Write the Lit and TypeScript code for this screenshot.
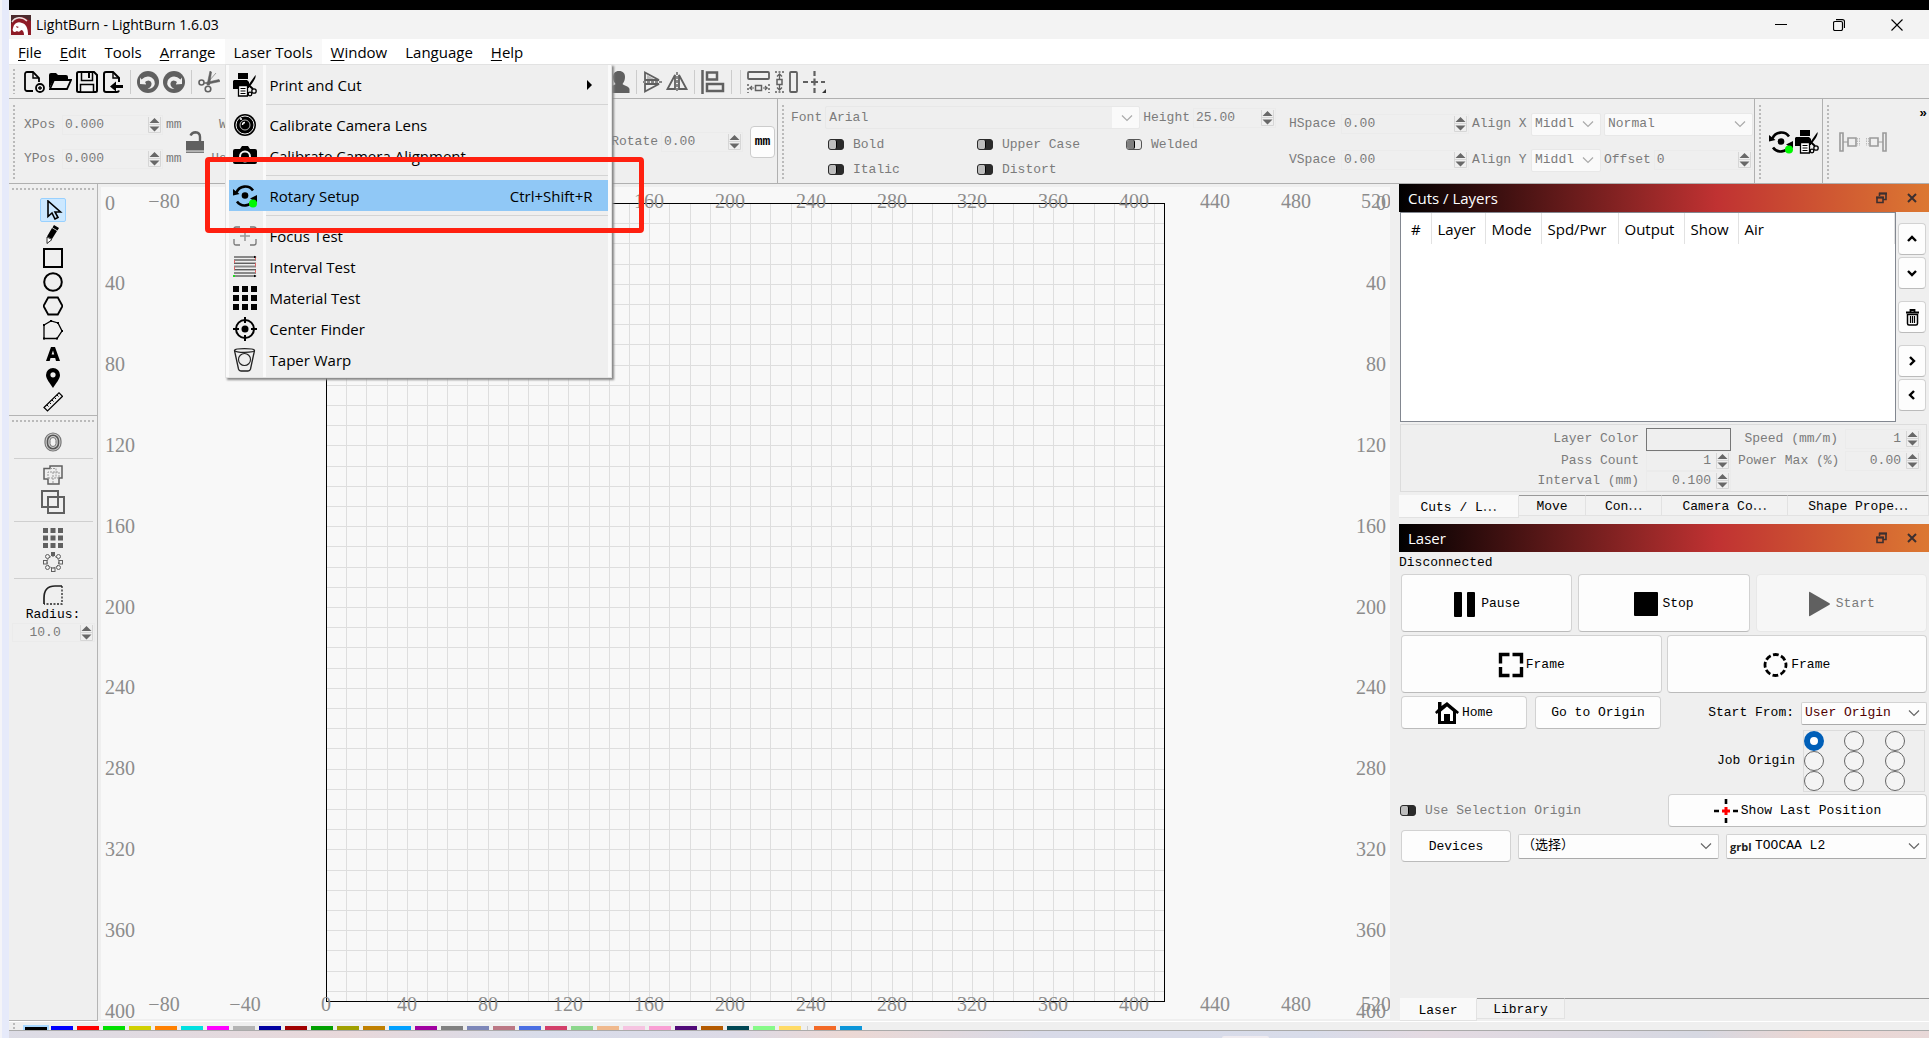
import { LitElement, html, css, svg, nothing } from "lit";
import { customElement } from "lit/decorators.js";
import { classMap } from "lit/directives/class-map.js";
import { styleMap } from "lit/directives/style-map.js";

const SCALE = 2.02;

const icon = (w: number, h: number, box: string, body: unknown) =>
  html`<svg class="ico" width=${w} height=${h} viewBox=${box} aria-hidden="true">${body}</svg>`;

const chevron = (color: string) =>
  icon(12, 8, "0 0 12 8", svg`<path d="M1 1.5 6 6.5 11 1.5" fill="none" stroke=${color} stroke-width="1.2"/>`);

const printCut = svg`
  <path d="M5 0h10v6H5z" fill="#000"/>
  <path d="M1 7h13l2 2v6h-2v-2H5v3H0V8z" fill="#000"/>
  <path d="M5.500 12.500h9V23h-9z" fill="#fff" stroke="#000" stroke-width="1.300"/>
  <path d="M7.500 15.500h5M7.500 18h5M7.500 20.500h5" stroke="#000" stroke-width="1"/>
  <path d="M22.500 2c1 3-3 8-6 12l-1.500-1.500z" fill="#000"/>
  <path d="M15 11.500 20 16" stroke="#000" stroke-width="2"/>
  <circle cx="21" cy="18" r="2.200" fill="none" stroke="#000" stroke-width="1.300"/>
  <circle cx="17" cy="21" r="1.800" fill="none" stroke="#000" stroke-width="1.300"/>`;

const rotary = svg`
  <path d="M3.500 8.500A9.500 9.500 0 0 1 20 6.500M20.500 15.500A9.500 9.500 0 0 1 4 17.500" fill="none" stroke="#000" stroke-width="2.600"/>
  <path d="M0 5v6.500l6.500-1.500zM24 18.500V11l-7 3.500z" fill="#000"/>
  <circle cx="12" cy="11.500" r="3.300" fill="#000"/>
  <circle cx="20" cy="19.500" r="4" fill="#00f800"/>`;

const dots = (size: number, gap: number, color: string) =>
  [0, 1, 2].flatMap((r) =>
    [0, 1, 2].map(
      (c) => svg`<rect x=${c * (size + gap)} y=${r * (size + gap)} width=${size} height=${size} fill=${color}/>`
    )
  );

const swirl = svg`
  <circle cx="11" cy="11" r="11" fill="#606060"/>
  <path d="M3 6.500l1.500 2Q9.500 4 14.500 6.500q5 3.500 2.500 8.500-2 3-6.500 3 4-2 4-5 0-3-3-3.500-2 0-3.500 1.500l1.500 2.500-6.500-.5z" fill="#efefef"/>
  <circle cx="11.500" cy="12.500" r="2.600" fill="#606060"/>`;

const I = {
  logo: icon(20, 20, "0 0 20 20", svg`
    <rect width="20" height="20" fill="#8e1b26"/>
    <path d="M0 0h20v6L12 2 3 5 0 9z" fill="#4b2a2c"/>
    <path d="M1 7C4 2 11 1 16 6" fill="none" stroke="#e9dedd" stroke-width="1.500"/>
    <path d="M2 13c1-5 5-7 9-5 4 1 6 5 6 12h-4c0-3-1-5-3-5-1 2-3 2-4 1l-2 1c-2 0-3-2-2-4z" fill="#fff"/>
    <path d="M5 11l3 1-2 1z" fill="#8e1b26"/>`),
  newFile: icon(22, 24, "0 0 22 24", svg`
    <path d="M10 21H4a2 2 0 0 1-2-2V4a2 2 0 0 1 2-2h6l6 6v4" fill="none" stroke="#000" stroke-width="1.800"/>
    <path d="M10 2v6h6" fill="none" stroke="#000" stroke-width="1.400"/>
    <circle cx="17" cy="18" r="4" fill="#efefef" stroke="#000" stroke-width="1.800"/>
    <path d="M17 16v4M15 18h4" stroke="#000" stroke-width="1.300"/>`),
  open: icon(23, 20, "0 0 23 20", svg`
    <path d="M0 16V3q0-2 2-2h5l2 2h8q2 0 2 2v2H5z" fill="#000"/>
    <path d="M5 8h17l-4 9H1z" fill="#efefef" stroke="#000" stroke-width="1.800"/>
    <path d="M0 16V3l5 4z" fill="#000"/>`),
  save: icon(22, 22, "0 0 22 22", svg`
    <path d="M1 2.500Q1 1 2.500 1H18l3 3v15.500q0 1.500-1.500 1.500h-17Q1 21 1 19.500z" fill="none" stroke="#000" stroke-width="2"/>
    <path d="M5.500 1v8.500h11V1" fill="none" stroke="#000" stroke-width="1.500"/><path d="M13 2v5" stroke="#000" stroke-width="2"/>
    <path d="M4.500 13.500h13V21h-13z" fill="#f4f4f4" stroke="#000" stroke-width="1.500"/>`),
  importFile: icon(22, 24, "0 0 22 24", svg`
    <path d="M17 20.500q-.5 1.500-2 1.500H4a2 2 0 0 1-2-2V4a2 2 0 0 1 2-2h7l6 6v4" fill="none" stroke="#000" stroke-width="2"/>
    <path d="M11 2v6h6" fill="none" stroke="#000" stroke-width="1.400"/>
    <path d="M8 16.500 14 11.500v3.500h7v3h-7v3.500z" fill="#000"/>`),
  undo: icon(22, 22, "0 0 22 22", swirl),
  redo: icon(22, 22, "0 0 22 22", svg`<g transform="matrix(-1 0 0 1 22 0)">${swirl}</g>`),
  cut: icon(22, 22, "0 0 22 22", svg`
    <path d="M6 12 21 8.500l1 2L10 13zM9 14 12 0l1.500 1-2 13zM11 10 18 2" fill="#606060" stroke="#606060" stroke-width=".6"/>
    <circle cx="3.500" cy="11.500" r="2.500" fill="none" stroke="#606060" stroke-width="1.600"/>
    <circle cx="10" cy="18" r="2.800" fill="none" stroke="#606060" stroke-width="1.600"/>`),
  person: icon(22, 22, "0 0 22 22", svg`
    <path d="M11 0c4 0 6 2.500 6 6 0 3-1 5-2.500 7 1 1.500 6.500 2 7 5v4H.5v-4c.5-3 6-3.500 7-5C6 11 5 9 5 6c0-3.500 2-6 6-6z" fill="#606060"/>`),
  flipV: icon(19, 22, "0 0 19 22", svg`
    <path d="M2 1.500 16 9H2zM2 20.500 16 13H2z" fill="none" stroke="#606060" stroke-width="1.800"/>
    <path d="M4 4v4h7z" fill="#bbb"/><path d="M0 11h19" stroke="#888" stroke-width="2" stroke-dasharray="3 1"/>`),
  flipH: icon(22, 19, "0 0 22 19", svg`
    <path d="M1.500 17 9 3v14zM20.500 17 13 3v14z" fill="none" stroke="#606060" stroke-width="1.800"/>
    <path d="M11 0v19" stroke="#888" stroke-width="2" stroke-dasharray="3 1"/>`),
  align: icon(24, 24, "0 0 24 24", svg`
    <path d="M1.500 0v24" stroke="#606060" stroke-width="2.500"/>
    <path d="M6 2.500h10v7H6zM6 14h16v7H6z" fill="none" stroke="#606060" stroke-width="2.500"/>`),
  distH: icon(24, 22, "0 0 24 22", svg`
    <rect x="1" y="1" width="21" height="7" rx="1" fill="none" stroke="#606060" stroke-width="1.800"/>
    <path d="M1 13v9M22 13v9" stroke="#606060" stroke-width="1.500" stroke-dasharray="2 2"/>
    <rect x="8.500" y="14.500" width="6" height="5" fill="none" stroke="#606060" stroke-width="1.500"/>
    <path d="M2 17h5M16 17h5M5 15l-2 2 2 2M18 15l2 2-2 2" fill="none" stroke="#606060" stroke-width="1.200"/>`),
  distV: icon(24, 22, "0 0 24 22", svg`
    <path d="M0 1h9M0 21h9" stroke="#606060" stroke-width="1.500" stroke-dasharray="2 1.500"/>
    <rect x="2" y="8.500" width="5" height="5" fill="none" stroke="#606060" stroke-width="1.500"/>
    <path d="M4.500 3v5M4.500 14v5M2 5.500l2.500-2.500L7 5.500M2 16.500 4.500 19 7 16.500" fill="none" stroke="#606060" stroke-width="1.300"/>
    <rect x="15" y="1" width="7" height="20" rx="1" fill="none" stroke="#606060" stroke-width="1.800"/>`),
  crossMove: icon(24, 22, "0 0 24 22", svg`
    <path d="M0 11h5M8 11h7M18 11h4M11.500 0v5M11.500 7.500v7M11.500 17v5" stroke="#606060" stroke-width="2.200"/>
    <path d="M23 18v4h-4z" fill="#333"/>`),
  lock: icon(18, 22, "0 0 18 22", svg`
    <path d="M4.500 4.500Q6 1.200 9.500 1.200q4.500.3 4.500 4.800v5" fill="none" stroke="#606060" stroke-width="2.400"/>
    <rect x="0" y="10" width="18" height="9.500" fill="#606060"/><path d="M0 21.200h18" stroke="#606060" stroke-width="1.200"/>`),
  rotary22: icon(24, 24, "0 0 24 24", rotary),
  printCut22: icon(24, 24, "0 0 24 24", printCut),
  dockL: icon(22, 20, "0 0 22 20", svg`
    <path d="M1 1h3v18H1zM9 6h8v8H9z" fill="none" stroke="#9a9a9a" stroke-width="1.600"/>
    <path d="M4 10h5" stroke="#9a9a9a"/><path d="M18.500 6v8M20.500 6v8" stroke="#bbb" stroke-dasharray="1.500 1"/>`),
  dockR: icon(22, 20, "0 0 22 20", svg`
    <path d="M18 1h3v18h-3zM5 6h8v8H5z" fill="none" stroke="#9a9a9a" stroke-width="1.600"/>
    <path d="M13 10h5" stroke="#9a9a9a"/><path d="M3.500 6v8M1.500 6v8" stroke="#bbb" stroke-dasharray="1.500 1"/>`),
  min: icon(12, 12, "0 0 12 12", svg`<path d="M0 5.500h12" stroke="#000"/>`),
  restore: icon(12, 12, "0 0 12 12", svg`
    <rect x=".5" y="2.500" width="9" height="9" rx="1.500" fill="none" stroke="#000" stroke-width="1.200"/>
    <path d="M3 .6h6.500q2 0 2 2V9" fill="none" stroke="#000" stroke-width="1.200"/>`),
  close: icon(12, 12, "0 0 12 12", svg`<path d="M.5.5l11 11M11.500.5l-11 11" stroke="#000" stroke-width="1.100"/>`),
  float: icon(11, 12, "0 0 11 12", svg`
    <path d="M3.500 4V1.500h6.500v6H7.500M1 5.500h6v5H1z" fill="none" stroke="#3c2f2f" stroke-width="1.600"/>
    <path d="M3 1.500h8M0 5.500h8" stroke="#3c2f2f" stroke-width="2"/>`),
  closeBold: icon(10, 10, "0 0 10 10", svg`<path d="M1 1l8 8M9 1 1 9" stroke="#3c2f2f" stroke-width="2"/>`),
};

const TOOLS = [
  ["Select", svg`<path d="M5 1v15.500l4-3.500 3 6 3-1.500-3-5.500h5.500z" fill="none" stroke="#000" stroke-width="1.600"/>`],
  ["Draw lines", svg`<path d="M11 1l5 3-1.500 2.500-5-3zM9 4l5 3-5 8-5-2.500z" fill="#000"/><path d="M4 13l5 2.500L4 19.500z" fill="#fff" stroke="#000" stroke-width=".8"/>`],
  ["Rectangle", svg`<rect x="1" y="1" width="18" height="18" fill="none" stroke="#000" stroke-width="2"/>`],
  ["Ellipse", svg`<circle cx="10" cy="10" r="8.800" fill="none" stroke="#000" stroke-width="2"/>`],
  ["Polygon", svg`<path d="M5.200 1.500h9.600L19.500 10l-4.700 8.500H5.200L.5 10z" fill="none" stroke="#000" stroke-width="1.800"/>`],
  ["Edit nodes", svg`<path d="M1 5 8 1l7 2 4 8-5 7.500H1z" fill="none" stroke="#000" stroke-width="1.300"/><path d="M0 4h2v2H0zM7 0h2v2H7zM14 2h2v2h-2zM18 10h2v2h-2zM13 17.500h2v2h-2zM0 17.500h2v2H0z" fill="#000"/>`],
  ["Text", svg`<path d="M3 17 8 3h4l5 14h-4l-.8-3H7.500l-.8 3zM8.600 10.500h2.600L10 6.500z" fill="#000" fill-rule="evenodd"/>`],
  ["Position laser", svg`<path d="M10 0a7 7 0 0 1 7 7c0 4-4 8-7 13C7 15 3 11 3 7a7 7 0 0 1 7-7z" fill="#000"/><circle cx="10" cy="6.800" r="2.600" fill="#efefef"/>`],
  ["Measure", svg`<path d="M1 15.500 16 .8l3.500 3.500L4.500 19z" fill="none" stroke="#000" stroke-width="1.200"/><path d="M4 13l1.500 1.500M6.500 10.500 8 12M9 8l1.500 1.500M11.500 5.500 13 7M14 3l1.500 1.500" stroke="#000"/>`],
] as const;

const G = "#606060";
const MOD_TOOLS = {
  offset: icon(18, 20, "0 0 18 20", svg`
    <rect x="1" y="1" width="16" height="18" rx="8" fill="#d0d0d0" stroke="#777" stroke-width="1.200"/>
    <rect x="3.500" y="3.200" width="11" height="13.600" rx="5.500" fill="none" stroke="#555" stroke-width="1.600"/>
    <rect x="6" y="5.500" width="6" height="9" rx="3" fill="#f4f4f4" stroke="#777"/>`),
  weld: icon(20, 20, "0 0 20 20", svg`
    <path d="M1 3.500h6V1h12v12h-3v6H5v-5H1z" fill="none" stroke=${G} stroke-width="1.500"/>
    <path d="M7 3.500h6V13M5 14V7h11v6H5M10 7v12" fill="none" stroke="#999" stroke-width="1" stroke-dasharray="2 1"/>`),
  union: icon(24, 24, "0 0 24 24", svg`
    <path d="M1 1h16v16H1zM7 7h16v16H7z" fill="none" stroke=${G} stroke-width="2"/>`),
  grid: icon(20, 20, "0 0 20 20", dots(5, 2.5, G)),
  radial: icon(20, 20, "0 0 20 20", svg`
    <rect x="8" y="0" width="4" height="4" fill=${G}/>
    <g fill="none" stroke=${G} stroke-width="1">
      <rect x="8.500" y="16" width="3.500" height="3.500"/><rect x=".5" y="8.500" width="3.500" height="3.500"/><rect x="16" y="8.500" width="3.500" height="3.500"/>
      <circle cx="4.500" cy="4.500" r="2"/><circle cx="15.500" cy="4.500" r="2"/><circle cx="4.500" cy="15.500" r="2"/><circle cx="15.500" cy="15.500" r="2"/>
      <circle cx="10" cy="10" r="5.800" stroke-dasharray="2 1.200"/></g>`),
  radius: icon(20, 20, "0 0 20 20", svg`
    <path d="M1 19V13Q1 1 12 1h7" fill="none" stroke="#222" stroke-width="1.700"/>
    <path d="M19 1v18H1" fill="none" stroke="#222" stroke-width="1.300" stroke-dasharray="2 1.500"/>`),
};

interface MenuEntry { label: string; art: unknown; keys?: string; sub?: boolean; active?: boolean; }

const MENU: (MenuEntry | null)[] = [
  { label: "Print and Cut", sub: true, art: printCut },
  null,
  { label: "Calibrate Camera Lens", art: svg`
    <circle cx="12" cy="12" r="11" fill="#000"/><circle cx="12" cy="12" r="9" fill="none" stroke="#eee" stroke-width="1"/>
    <circle cx="12" cy="12" r="5" fill="none" stroke="#ccc" stroke-width=".9"/>
    <path d="M9.500 12a2.500 2.500 0 0 1 2.500-2.500" fill="none" stroke="#fff" stroke-width="1.300"/>
    <circle cx="8" cy="6" r="1.100" fill="#fff"/>` },
  { label: "Calibrate Camera Alignment", art: svg`
    <path d="M2 5h5l2-3h6l2 3h5q2 0 2 2v11q0 2-2 2H2q-2 0-2-2V7q0-2 2-2z" fill="#000"/>
    <circle cx="12" cy="12.500" r="5" fill="none" stroke="#f0f0f0" stroke-width="2"/>` },
  null,
  { label: "Rotary Setup", keys: "Ctrl+Shift+R", active: true, art: rotary },
  null,
  { label: "Focus Test", art: svg`
    <path d="M1 9V5q0-2 2-2h4M17 3h4q2 0 2 2v4M23 15v4q0 2-2 2h-4M7 21H3q-2 0-2-2v-4" fill="none" stroke="#777" stroke-width="1.300"/>
    <path d="M12 7v10M7 12h10" stroke="#999" stroke-width="1.600"/>` },
  { label: "Interval Test", art: svg`
    <path d="M1 2h22M1 5h22M1 8.200h22M1 14.800h22M1 18h22M1 21h22" stroke="#222" stroke-width="1"/>
    <path d="M1 11.500h22" stroke="#888" stroke-width="2"/>
    <path d="M22.500 2v3M1.500 5v3M22.500 8v3.500M1.500 11.500V15M22.500 15v3" stroke="#d66" stroke-width="1"/>
    <path d="M0 20h2v2H0z" fill="#2d2"/><path d="M21 .8 23.500 2 21 3.200zM21 19.800l2.500 1.200-2.500 1.200z" fill="#000"/>` },
  { label: "Material Test", art: dots(6, 3, "#000") },
  { label: "Center Finder", art: svg`
    <circle cx="12" cy="12" r="9" fill="none" stroke="#000" stroke-width="2"/><circle cx="12" cy="12" r="3.500" fill="#000"/>
    <path d="M12 0v6M12 18v6M0 12h6M18 12h6" stroke="#000" stroke-width="2"/>` },
  { label: "Taper Warp", art: svg`
    <path d="M1.500 2.500 5.500 21q.5 2 2.500 2h7q2 0 2.500-2l4-18.500" fill="none" stroke="#222" stroke-width="1.300"/>
    <ellipse cx="11.500" cy="2.500" rx="10" ry="1.800" fill="none" stroke="#222" stroke-width="1.300"/>
    <circle cx="11.500" cy="11.500" r="6" fill="none" stroke="#222" stroke-width="1.100"/>` },
];

const PALETTE = ["#000000", "#0000ff", "#ff0000", "#00e000", "#d0d000", "#ff8000", "#00e0e0", "#ff00ff", "#b4b4b4",
  "#0000a0", "#a00000", "#00a000", "#a0a000", "#c08000", "#00a0ff", "#a000a0", "#808080", "#7d87b9", "#bb7784",
  "#4a6fe3", "#d33f6a", "#8cd78c", "#f0b98d", "#f6c4e1", "#fa9ed4", "#500a78", "#b45a00", "#004754", "#86fa88", "#ffdb66"];
const TOOL_LAYERS = ["#f36926", "#0c96d9"];

const shared = css`
  * { box-sizing: border-box; }
  svg { display: block; flex: none; }
  button, input, select { font: inherit; color: inherit; margin: 0; }
  button { padding: 0; border: 0; background: none; display: flex; align-items: center; justify-content: center; }
  .mono { font-family: "Liberation Mono", "Noto Sans CJK SC", monospace; font-size: 13px; line-height: 16px; }
  .dim { color: #7b7b7b; }
  .spin { display: flex; align-items: center; height: 20px; border: 1px solid #ebebeb; min-width: 0; }
  .spin input { flex: 1; width: 100%; min-width: 0; border: 0; padding: 0 2px; background: none; outline: 0; }
  .spin .ico { margin-right: 1px; }
  .right input { text-align: right; padding-right: 5px; }
  .combo { display: grid; align-items: center; height: 23px; min-width: 0; }
  .combo select { grid-area: 1 / 1; appearance: none; width: 100%; height: 100%; border: 1px solid #e8e8e8; border-radius: 2px;
    background: #fafafa; padding: 0 18px 0 3px; opacity: 1; outline: 0; }
  .combo .ico { grid-area: 1 / 1; justify-self: end; margin-right: 7px; pointer-events: none; }
  .check { display: flex; align-items: center; gap: 9px; }
  .check input { appearance: none; width: 16px; height: 11px; background: #2b2b2b; border: 1px solid #2b2b2b; border-radius: 3px; display: flex; flex: none; }
  .check input::before { content: ""; width: 7px; height: 9px; background: #bdbdbd; border-right: 1px solid #000; border-radius: 2px; }
  .check input:checked { background: #e6e6e6; border-color: #555; }
  .check input:checked::before { background: #808080; }
`;

const arrows = icon(13, 16, "0 0 13 16", svg`
  <path d="M.5 0v15.500h12V0M0 7.500h13" fill="none" stroke="#d6d6d6"/>
  <path d="M1.500 6 6.500 1l5 5zM1.500 9.500l5 5 5-5z" fill="#686868"/>`);

const spin = (name: string, value: string, cls = "") => html`
  <span class="spin ${cls}"><input type="text" aria-label=${name} .value=${value} />${arrows}</span>`;

const combo = (name: string, value: string, cls = "", color = "#aaa") => html`
  <span class="combo ${cls}"><select aria-label=${name}><option>${value}</option></select>${chevron(color)}</span>`;

const check = (label: string, on = false) => html`
  <label class="check"><input type="checkbox" .checked=${on} disabled />${label}</label>`;

@customElement("work-canvas")
export class WorkCanvas extends LitElement {
  static styles = css`
    :host { display: flex; flex: 1; min-width: 0; background: #f8f8f8; }
    .plot { flex: 1; min-width: 0; overflow: hidden; }
    .num { font-family: "Liberation Serif", serif; font-size: 20px; fill: #8c8c8c; }
    .thin { stroke: #dedede; shape-rendering: crispEdges; }
    .area { fill: none; stroke: #000; shape-rendering: crispEdges; }
    .overflow { overflow: visible; }
  `;
  render() {
    const ox = 225, oy = 16;
    const w = Math.round(415 * SCALE), h = Math.round(395 * SCALE);
    const xs = Array.from({ length: 16 }, (_, i) => i * 40 - 80);
    const ys = Array.from({ length: 11 }, (_, i) => i * 40);
    const txt = (v: number) => (v < 0 ? `−${-v}` : `${v}`);
    const top = xs.map((v) => svg`<text class="num" text-anchor="middle" x=${Math.round(ox + v * SCALE)} y="0">${txt(v)}</text>`);
    const side = (anchor: string) =>
      ys.map((v) => svg`<text class="num" text-anchor=${anchor} x="0" y=${Math.floor(23 + v * SCALE)}>${v}</text>`);
    return html`<svg class="plot" role="img" aria-label="Work area">
      ${Array.from({ length: 41 }, (_, i) => {
        const x = Math.round(ox + (i + 1) * 10 * SCALE) + 0.5;
        return svg`<line class="thin" x1=${x} x2=${x} y1=${oy} y2=${oy + h}/>`;
      })}
      ${Array.from({ length: 39 }, (_, i) => {
        const y = Math.round(oy + (i + 1) * 10 * SCALE) + 0.5;
        return svg`<line class="thin" y1=${y} y2=${y} x1=${ox} x2=${ox + w}/>`;
      })}
      <rect class="area" x=${ox + 0.5} y=${oy + 0.5} width=${w} height=${h}/>
      <svg class="overflow" y="21">${top}</svg>
      <svg class="overflow" y="824">${top}</svg>
      <svg class="overflow" x="4">${side("start")}</svg>
      <svg class="overflow" x="100%"><g transform="translate(-4 0)">${side("end")}</g></svg>
    </svg>`;
  }
}

@customElement("dock-panels")
export class DockPanels extends LitElement {
  static styles = [shared, css`
    :host { display: flex; flex-direction: column; width: 530px; flex: none; }
    .title { height: 28px; display: flex; align-items: center; padding: 0 12px 0 9px; color: #fff; font-size: 15px;
      background: linear-gradient(90deg, #000 0%, #c03232 60%, #dc7832 100%); }
    .title h2 { font: inherit; margin: 0; flex: 1; }
    .title .pair { display: flex; gap: 20px; }
    .cuts { display: flex; gap: 2px; padding: 0 3px 0 1px; }
    .list { flex: 1; height: 210px; border: 1px solid #828790; background: #fff; }
    table { border-collapse: collapse; width: 100%; font-size: 15px; table-layout: fixed; }
    th { height: 31px; font-weight: 400; text-align: left; padding: 0 0 0 6px; border-right: 1px solid #e2e2e2; white-space: nowrap; }
    th:first-child { padding-left: 10px; }
    .c0 { width: 30px; } .c1, .c5 { width: 54px; } .c2 { width: 56px; } .c3 { width: 77px; } .c4 { width: 66px; }
    .moves { display: flex; flex-direction: column; gap: 2px; padding-top: 11px; width: 28px; }
    .push { background: #fdfdfd; border: 1px solid #d2d2d2; border-bottom-color: #bbb; border-radius: 4px; white-space: nowrap; }
    .moves .push { height: 32px; width: 28px; }
    .moves .apart { margin-top: 10px; }
    .params { margin: 2px 2px 0 1px; border: 1px solid #dcdcdc; height: 68px; padding: 2px 5px; display: grid; justify-content: end;
      grid-template-columns: 110px 85px 100px 76px; column-gap: 7px; grid-template-rows: 24px 20px 20px; align-items: center; text-align: right; white-space: nowrap; }
    .swatch { height: 23px; border: 1px solid #777; }
    .tabs { display: flex; align-items: flex-start; }
    .tabs button { height: 21px; padding-top: 2px; border: solid #e2e2e2; border-width: 0 1px 1px 0; border-top: 1px solid #999; background: #f2f2f2; }
    .tabs button.on { height: 23px; border-top-color: #f9f9f9; background: #f9f9f9; }
    .t0 { width: 120px; } .t1 { width: 67px; } .t2 { width: 76px; } .t3 { width: 126px; } .t4 { flex: 1; }
    .top-tabs { margin-top: 3px; }
    .laser-title { margin-top: 6px; }
    .laser { flex: 1; padding: 3px 2px 0 2px; display: flex; flex-direction: column; }
    .state { margin: 0 0 3px -2px; }
    .row { display: flex; gap: 6px; }
    .row .push { flex: 1; padding-top: 1px; }
    .big { margin-bottom: 3px; } .big .push { height: 58px; gap: 2px; }
    .wide { gap: 5px; }
    .push[disabled] { background: #f7f7f7; border-color: #e8e8e8; color: #7b7b7b; }
    .row.home { gap: 8px; height: 34px; }
    .home .push { height: 33px; flex: 0 0 126px; gap: 3px; }
    .home .from { margin-left: auto; display: flex; align-items: center; gap: 7px; }
    .combo.solid select { background: #fdfdfd; border-color: #d2d2d2; border-bottom-color: #aaa; }
    .combo.origin select { color: #500000; }
    .origin { width: 126px; }
    .job { display: flex; justify-content: flex-end; align-items: center; gap: 8px; border: 0; padding: 0 2px 0 0; margin: 0; }
    .radios { display: grid; grid-template-columns: 40px 41px 39px; border: 1px solid #dcdcdc; }
    .radios input { appearance: none; width: 20px; height: 20px; border-radius: 50%; border: 1px solid #666; background: #f4f4f4; }
    .radios input:checked { border: 6px solid #005fb8; background: #fff; }
    .last { align-items: center; justify-content: space-between; margin-top: 2px; }
    .last .push { flex: 0 0 259px; height: 33px; gap: 3px; }
    .last .check { margin-left: -1px; }
    .devices { align-items: center; gap: 7px; margin-top: 3px; }
    .devices .push { flex: 0 0 110px; height: 32px; }
    .devices .combo { flex: 1; height: 25px; }
    .controller select { padding-left: 28px; }
    .grbl { grid-area: 1 / 1; z-index: 1; padding-left: 4px; font: 700 11px "Open Sans", sans-serif; color: #222; pointer-events: none; }
    .filler { flex: 1; }
    .bottom-tabs { height: 23px; border-bottom: 0; }
    .bottom-tabs .l0 { width: 77px; margin-left: 1px; } .bottom-tabs .l1 { width: 88px; }
    .bottom-tabs .rest { flex: 1; border-top: 1px solid #999; }
  `];

  private title(name: string, cls = "") {
    return html`<div class="title ${cls}"><h2>${name}</h2><span class="pair">
      <button aria-label="Float ${name}">${I.float}</button><button aria-label="Close ${name}">${I.closeBold}</button></span></div>`;
  }

  render() {
    const move = (name: string, d: string, cls = "") => html`<button class="push ${cls}" aria-label=${name}>
      ${icon(10, 10, "0 0 10 10", svg`<path d=${d} fill="none" stroke="#000" stroke-width="2.400"/>`)}</button>`;
    const heads = ["#", "Layer", "Mode", "Spd/Pwr", "Output", "Show", "Air"];
    const tabs = ["Cuts / L⋯", "Move", "Con⋯", "Camera Co⋯", "Shape Prope⋯"];
    return html`
      ${this.title("Cuts / Layers")}
      <div class="cuts">
        <div class="list"><table><thead><tr>${heads.map((h, i) => html`<th class="c${i}">${h}</th>`)}</tr></thead></table></div>
        <div class="moves">
          ${move("Move up", "M1 7 5 3l4 4")}
          ${move("Move down", "M1 3 5 7l4-4")}
          <button class="push apart" aria-label="Delete layer">${icon(13, 17, "0 0 13 17", svg`
            <path d="M4.500 2.500V1h4v1.500M0 3.500h13" fill="none" stroke="#000" stroke-width="1.800"/>
            <path d="M1.500 5.500h10v9q0 1.500-1.500 1.500H3q-1.500 0-1.500-1.500z" fill="none" stroke="#000" stroke-width="1.500"/>
            <path d="M4.500 7v7M6.500 7v7M8.500 7v7" stroke="#000" stroke-width="1.200"/>`)}</button>
          ${move("Next", "M3 1l4 4-4 4", "apart")}
          ${move("Previous", "M7 1 3 5l4 4")}
        </div>
      </div>
      <div class="params mono dim">
        <span>Layer Color</span><span class="swatch"></span><span>Speed (mm/m)</span>${spin("Speed", "1", "right")}
        <span>Pass Count</span>${spin("Pass Count", "1", "right")}<span>Power Max (%)</span>${spin("Power Max", "0.00", "right")}
        <span>Interval (mm)</span>${spin("Interval", "0.100", "right")}
      </div>
      <div class="tabs top-tabs mono" role="tablist">
        ${tabs.map((t, i) => html`<button role="tab" class="t${i} ${i ? "" : "on"}">${t}</button>`)}
      </div>
      ${this.title("Laser", "laser-title")}
      <div class="laser mono">
        <div class="state">Disconnected</div>
        <div class="row big">
          <button class="push">${icon(26, 26, "0 0 26 26", svg`<rect x="1" y="1" width="8" height="25" rx="1"/><rect x="14" y="1" width="8" height="25" rx="1"/>`)}Pause</button>
          <button class="push">${icon(26, 26, "0 0 26 26", svg`<rect y="1" width="24" height="24" rx="1"/>`)}Stop</button>
          <button class="push" disabled>${icon(26, 26, "0 0 26 26", svg`<path d="M1 1.500Q1 .5 2 1L21.500 12.200q1 .8 0 1.600L2 25q-1 .5-1-.5z" fill="#606060"/>`)}Start</button>
        </div>
        <div class="row wide big">
          <button class="push">${icon(26, 26, "0 0 26 26", svg`
            <path d="M2.500 11.500V2.500h9M14.500 2.500h9v9M23.500 15v8.500h-9M11.500 23.500h-9V15" fill="none" stroke="#000" stroke-width="3.400"/>`)}Frame</button>
          <button class="push">${icon(26, 26, "0 0 26 26", svg`
            <circle cx="12.500" cy="13" r="10.500" fill="none" stroke="#000" stroke-width="2.800" stroke-dasharray="5.800 2.450" stroke-dashoffset="2.900"/>`)}Frame</button>
        </div>
        <div class="row home">
          <button class="push">${icon(24, 22, "0 0 24 22", svg`
            <path d="M3 0h3.500v4L12 0l12 10-1.500 2L21 11v11H3V11l-1.500 1L0 10l3-3z"/>
            <path d="M6 9.500 12 4.500l6 5V19h-3v-7H9v7H6z" fill="#fff"/>`)}Home</button>
          <button class="push">Go to Origin</button>
          <span class="from">Start From:${combo("Start From", "User Origin", "solid origin", "#666")}</span>
        </div>
        <div class="job" role="radiogroup" aria-label="Job Origin">Job Origin
          <span class="radios">${Array.from({ length: 9 }, (_, i) => html`
            <input type="radio" name="job" aria-label="Origin ${i + 1}" ?checked=${i === 0} />`)}</span>
        </div>
        <div class="row last">
          <span class="dim">${check("Use Selection Origin")}</span>
          <button class="push">${icon(24, 24, "0 0 24 24", svg`
            <path d="M0 12h5M19 12h5M12 0v5M12 19v5" stroke="#000" stroke-width="2.600"/>
            <path d="M12 8v8M8 12h8" stroke="#f00" stroke-width="3"/>`)}Show Last Position</button>
        </div>
        <div class="row devices">
          <button class="push">Devices</button>
          ${combo("Port", "（选择）", "solid", "#666")}
          <span class="combo solid controller"><span class="grbl">grbl</span>
            <select aria-label="Controller"><option>TOOCAA L2</option></select>${chevron("#666")}</span>
        </div>
        <div class="filler"></div>
      </div>
      <div class="tabs bottom-tabs mono" role="tablist">
        <button role="tab" class="l0 on">Laser</button><button role="tab" class="l1">Library</button><span class="rest"></span>
      </div>`;
  }
}

@customElement("app-root")
export class AppRoot extends LitElement {
  static styles = [shared, css`
    :host { display: block; font-family: "Open Sans", "Noto Sans", sans-serif; font-size: 15px; color: #000; }
    .desk { position: relative; min-height: 100vh; display: flex; padding-left: 9px;
      background: linear-gradient(90deg, #f4f4f8 2px, #e6eafa 2px, #e6eafa 9px, transparent 9px),
        linear-gradient(90deg, #dcdce6 0, #e8d8da 18%, #d8dcea 28%, #dcdae6 38%, #ecd8d4 44%, #d8dae8 54%, #d8dcea 68%, #e4dae2 74%, #d6d8e2 88%, #ecd6d2 94%, #e8d8d8 100%); }
    .window { flex: 1; min-width: 0; display: flex; flex-direction: column; background: #efefef; margin-bottom: 7px; border-top: 10px solid #000; border-bottom: 1px solid #aaa; }
    .titlebar { height: 29px; display: flex; align-items: center; background: #f3f3f3; padding: 0 26px 0 2px; gap: 5px; }
    .titlebar h1 { font: inherit; font-size: 14px; margin: 0; flex: 1; }
    .winbtns { display: flex; gap: 46px; }
    .menubar { height: 25px; display: flex; background: #fff; }
    .menubar > .slot { position: relative; display: flex; }
    .menubar .slot > button { padding: 0 9px; height: 25px; white-space: pre; }
    .menubar .slot.open > button { background: #f8f8f8; }
    u { text-underline-offset: 2px; }
    .popup { position: absolute; z-index: 5; left: 0; top: 25px; width: 387px; padding: 4px 3px 2px; border: 1px solid #e2e2e2; display: flex; flex-direction: column;
      background: linear-gradient(90deg, #fafafa 3px, #efefef 3px, #efefef 37px, #fafafa 37px, #fafafa 40px, #efefef 40px, #efefef 382px, #fafafa 382px); box-shadow: 2px 2px 2px #888; }
    .popup button { height: 31px; width: 379px; padding: 0 15px 0 4px; gap: 13px; justify-content: flex-start; text-align: left; }
    .popup button.active { background: #90c8f6; }
    .popup .name { flex: 1; }
    .popup .rule { height: 9px; padding: 4px 0; margin-left: 37px; background: #d4d4d4 content-box; }
    .toolbar { height: 35px; border-top: 1px solid #e6e6e6; border-bottom: 1px solid #b0b0b0; display: flex; align-items: center; padding-left: 4px; gap: 4px; }
    .grip { width: 2px; align-self: stretch; margin: 4px 0; background: repeating-linear-gradient(#bababa 0 2px, transparent 2px 4px); flex: none; }
    .toolbar .grip { margin-right: 4px; }
    .vr { width: 1px; height: 24px; background: #ccc; margin: 0 2px; flex: none; }
    .more { margin-left: 384px; }
    .props { display: flex; height: 85px; border-bottom: 1px solid #b0b0b0; }
    .seg { display: flex; align-items: center; padding: 2px 0 0 4px; border-right: 1px solid #b0b0b0; }
    .seg:last-child { border-right: 0; }
    .pos { display: grid; grid-template-columns: 35px 101px 16px; column-gap: 3px; row-gap: 14px; align-items: center; margin-left: 9px; }
    .lock { margin: 0 6px 0 4px; align-self: center; }
    .size { display: grid; grid-template-columns: 48px 101px 16px; column-gap: 3px; row-gap: 14px; align-items: center; text-align: right; }
    .size input { text-align: left; }
    .rot { display: flex; align-items: center; gap: 3px; margin-left: auto; padding-right: 2px; }
    .rot .spin { width: 82px; }
    .unit { width: 25px; height: 32px; margin-left: 4px; border: 1px solid #ccc; border-radius: 4px; background: #fdfdfd; color: #000; font-weight: 700; }
    .geom { width: 769px; }
    .textseg { flex: 1; min-width: 0; padding-right: 1px; }
    .fonts { flex: 1; min-width: 0; display: flex; flex-direction: column; gap: 8px; margin-left: 7px; }
    .fontline { display: flex; align-items: center; gap: 3px; height: 22px; }
    .fontline .face { flex: 1; }
    .face select { background: linear-gradient(90deg, #efefef 286px, #fafafa 286px); }
    .fontline .spin { width: 83px; }
    .checks { display: grid; grid-template-columns: repeat(3, 149px); row-gap: 9px; padding-left: 37px; }
    .spacing { display: grid; grid-template-columns: 49px 128px 56px 70px 149px; column-gap: 3px; row-gap: 13px; align-items: center; margin-left: 13px; white-space: nowrap; }
    .offset { display: flex; align-items: center; gap: 3px; }
    .offset .spin { flex: 1; }
    .launch { width: 68px; gap: 2px; } .launch .grip, .docking .grip { margin-right: 6px; }
    .docking { width: 106px; gap: 4px; }
    .chev { align-self: flex-start; margin: 5px 0 0 auto; padding-right: 2px; font-weight: 700; color: #000; }
    .body { flex: 1; display: flex; min-height: 0; }
    .tools { width: 89px; flex: none; border-right: 1px solid #b4b4b4; border-bottom: 1px solid #b4b4b4; display: flex; flex-direction: column; align-items: center; }
    .hgrip { height: 2px; width: 83px; margin: 4px 0 8px; flex: none; background: repeating-linear-gradient(90deg, #bababa 0 2px, transparent 2px 4px); }
    .tools .tool { width: 26px; height: 24px; flex: none; border: 1px solid transparent; border-radius: 2px; }
    .tools .tool.on { background: #cce8ff; border-color: #99d1ff; }
    .tools .tool.tall { height: 30px; }
    .cut-line { align-self: stretch; height: 1px; background: #b4b4b4; margin-top: 1px; flex: none; }
    .hr { width: 79px; height: 1px; background: #cfcfcf; margin: 4px 0; flex: none; }
    .radius { display: flex; flex-direction: column; align-items: center; }
    .radius .spin { width: 83px; height: 19px; }
    .radius .spin input { padding: 0 8px 0 17px; color: #7b7b7b; }
    .stage { flex: 1; min-width: 0; display: flex; padding: 3px 9px 2px 3px; }
    .palette { height: 9px; border-top: 1px solid #fff; display: flex; gap: 4px; padding: 0 0 0 4px; align-items: flex-end; overflow: hidden; }
    .palette .pgrip { width: 2px; height: 7px; background: repeating-linear-gradient(#bababa 0 2px, transparent 2px 4px); margin-right: 6px; }
    .palette .sw { width: 22px; height: 4px; flex: none; }
    .palette .sw.on { outline: 2px solid #a8d8ff; height: 3px; }
    .palette .pvr { width: 1px; height: 4px; background: #ccc; margin: 0 2px 0 2px; }
    .mark { position: absolute; z-index: 9; left: 205px; top: 157px; width: 439px; height: 76px; border: 5px solid #ff2010; border-radius: 4px; pointer-events: none; }
    .pill { position: absolute; left: 1222px; bottom: 0; width: 47px; height: 2px; border-radius: 3px 3px 0 0; background: #efebf0; }
  `];

  private menubar() {
    const items = [html`<u>F</u>ile`, html`<u>E</u>dit`, "Tools", html`<u>A</u>rrange`, "Laser Tools", html`<u>W</u>indow`, "Language", html`<u>H</u>elp`];
    return html`<nav class="menubar">${items.map((it, i) => html`
      <span class=${classMap({ slot: true, open: i === 4 })}><button>${it}</button>${i === 4 ? this.popup() : nothing}</span>`)}</nav>`;
  }

  private popup() {
    return html`<div class="popup" role="menu">${MENU.map((m) => m
      ? html`<button role="menuitem" class=${classMap({ active: !!m.active })}>
          ${icon(24, 24, "0 0 24 24", m.art)}<span class="name">${m.label}</span>
          ${m.keys ? html`<span>${m.keys}</span>` : nothing}
          ${m.sub ? icon(6, 10, "0 0 6 10", svg`<path d="M0 0l5 5-5 5z"/>`) : nothing}</button>`
      : html`<div class="rule"></div>`)}</div>`;
  }

  render() {
    const b = (name: string, art: unknown, cls = "") => html`<button class=${cls} aria-label=${name}>${art}</button>`;
    const vr = html`<span class="vr"></span>`;
    return html`<div class="desk">
      <div class="window">
        <header class="titlebar">${I.logo}<h1>LightBurn - LightBurn 1.6.03</h1>
          <span class="winbtns">${b("Minimize", I.min)}${b("Restore", I.restore)}${b("Close", I.close)}</span></header>
        ${this.menubar()}
        <div class="toolbar">
          <span class="grip"></span>
          ${b("New", I.newFile)}${b("Open", I.open)}${b("Save", I.save)}${b("Import", I.importFile)}${vr}
          ${b("Undo", I.undo)}${b("Redo", I.redo)}${vr}${b("Cut", I.cut)}
          ${b("Account", I.person, "more")}${vr}
          ${b("Flip vertical", I.flipV)}${b("Flip horizontal", I.flipH)}${vr}
          ${b("Align", I.align)}${vr}${vr}
          ${b("Distribute horizontally", I.distH)}${b("Distribute vertically", I.distV)}${b("Move to position", I.crossMove)}
        </div>
        <div class="props mono dim">
          <div class="seg geom"><span class="grip"></span>
            <div class="pos"><span>XPos</span>${spin("XPos", "0.000")}<span>mm</span><span>YPos</span>${spin("YPos", "0.000")}<span>mm</span></div>
            <button class="lock" aria-label="Lock aspect ratio">${I.lock}</button>
            <div class="size"><span>Width</span>${spin("Width", "0.000")}<span>mm</span><span>Height</span>${spin("Height", "0.000")}<span>mm</span></div>
            <div class="rot">Rotate${spin("Rotate", "0.00")}<button class="unit">mm</button></div>
          </div>
          <div class="seg textseg"><span class="grip"></span>
            <div class="fonts">
              <div class="fontline">Font ${combo("Font", "Arial", "face")}Height${spin("Text height", "25.00")}</div>
              <div class="checks">${check("Bold")}${check("Upper Case")}${check("Welded", true)}${check("Italic")}${check("Distort")}</div>
            </div>
            <div class="spacing">
              <span>HSpace</span>${spin("HSpace", "0.00")}<span>Align X</span>${combo("Align X", "Middl")}${combo("Style", "Normal")}
              <span>VSpace</span>${spin("VSpace", "0.00")}<span>Align Y</span>${combo("Align Y", "Middl")}
              <span class="offset">Offset${spin("Offset", "0")}</span>
            </div>
          </div>
          <div class="seg launch"><span class="grip"></span>${b("Rotary", I.rotary22)}${b("Print and cut", I.printCut22)}</div>
          <div class="seg docking"><span class="grip"></span>${b("Dock left", I.dockL)}${b("Dock right", I.dockR)}<span class="chev">»</span></div>
        </div>
        <main class="body">
          <aside class="tools">
            <span class="hgrip"></span>
            ${TOOLS.map(([name, art], i) => b(name, icon(20, 20, "0 0 20 20", art), `tool ${i ? "" : "on"}`))}
            <span class="cut-line"></span><span class="hgrip"></span>
            ${b("Offset shapes", MOD_TOOLS.offset, "tool")}<span class="hr"></span>
            ${b("Weld", MOD_TOOLS.weld, "tool")}${b("Boolean union", MOD_TOOLS.union, "tool tall")}<span class="hr"></span>
            ${b("Grid array", MOD_TOOLS.grid, "tool")}${b("Circular array", MOD_TOOLS.radial, "tool")}<span class="hr"></span>
            ${b("Radius", MOD_TOOLS.radius, "tool")}
            <div class="radius mono"><span>Radius:</span>${spin("Radius", "10.0")}</div>
          </aside>
          <section class="stage"><work-canvas></work-canvas></section>
          <dock-panels></dock-panels>
        </main>
        <footer class="palette"><span class="pgrip"></span>
          ${PALETTE.map((c, i) => html`<span class=${classMap({ sw: true, on: i === 0 })} style=${styleMap({ background: c })}></span>`)}
          <span class="pvr"></span>
          ${TOOL_LAYERS.map((c) => html`<span class="sw" style=${styleMap({ background: c })}></span>`)}
        </footer>
      </div>
      <div class="mark"></div><div class="pill"></div>
    </div>`;
  }
}
